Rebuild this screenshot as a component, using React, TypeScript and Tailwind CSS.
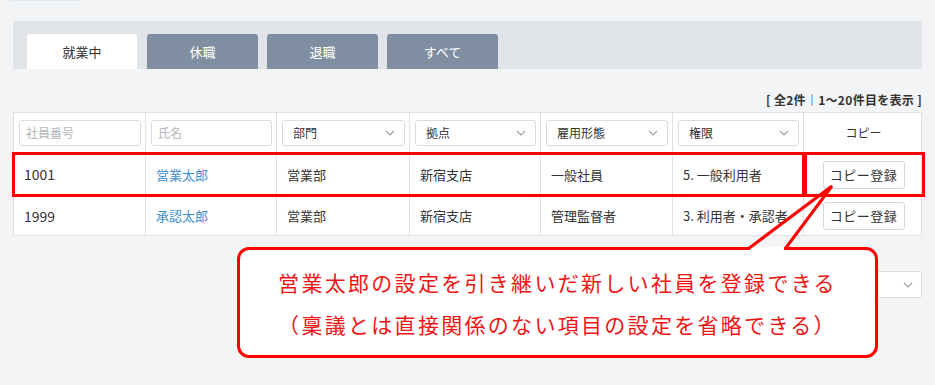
const font = "font-['Noto_Sans_CJK_JP','Noto_Sans',sans-serif]";

const cols = "grid grid-cols-[132px_131px_133px_131px_132px_131px_119px]";

const Chevron = () => (
    <svg width="10" height="6" viewBox="0 0 10 6" className="shrink-0">
        <path d="M1 1l4 4 4-4" fill="none" stroke="#9aa0a6" strokeWidth="1.1" />
    </svg>
);

const Select = ({ label }: { label: string }) => (
    <div className="h-[26px] bg-white border border-[#d9dcdf] rounded-[3px] flex items-center justify-between pl-[10px] pr-[9px] text-[12px] text-[#333]">
        <span>{label}</span>
        <Chevron />
    </div>
);

const Input = ({ ph }: { ph: string }) => (
    <div className="h-[26px] bg-white border border-[#d9dcdf] rounded-[3px] flex items-center pl-[6px] text-[12px] text-[#b3b6ba]">
        {ph}
    </div>
);

const CopyButton = () => (
    <div className="w-[82px] h-[28px] bg-white border border-[#d4d7da] rounded-[3px] flex items-center justify-center text-[13px] text-[#333] tracking-[0.5px]">
        コピー登録
    </div>
);

const rows = [
    { id: '1001', name: '営業太郎', dept: '営業部', site: '新宿支店', type: '一般社員', role: '5. 一般利用者', h: 'h-[44px]' },
    { id: '1999', name: '承認太郎', dept: '営業部', site: '新宿支店', type: '管理監督者', role: '3. 利用者・承認者', h: 'h-[39px]' },
];

const App = () => {
    return (
        <div className={`relative w-[935px] h-[385px] overflow-hidden bg-[#f3f4f6] ${font}`}>
            <div className="h-px w-[70px] ml-[10px] bg-[#dbe9f5]" />
            <div className="px-[13px] pt-[20px]">
                {/* Tabs */}
                <div className="h-[48px] bg-[#e1e5e9] flex items-end gap-[9px] pl-[14px]">
                    <div className="w-[110px] h-[35px] mr-px bg-white rounded-t-[3px] flex items-center justify-center text-[13px] text-[#333]">
                        就業中
                    </div>
                    {['休職', '退職', 'すべて'].map((t) => (
                        <div
                            key={t}
                            className="w-[111px] h-[35px] bg-[#7f8fa1] rounded-t-[3px] flex items-center justify-center text-[13px] text-white"
                        >
                            {t}
                        </div>
                    ))}
                </div>

                {/* Count */}
                <div className="h-[43px] flex items-end justify-end pb-[3px] text-[12px] font-bold text-[#333] tracking-[0.3px]">
                    [ 全2件｜1〜20件目を表示 ]
                </div>

                {/* Table */}
                <div className="bg-white border border-[#dde0e4] border-b-0">
                    <div className={`${cols} h-[40px] border-b border-[#dde0e4]`}>
                        <div className="border-r border-[#dde0e4] pl-[5px] pr-[4px] flex flex-col justify-center"><Input ph="社員番号" /></div>
                        <div className="border-r border-[#dde0e4] pl-[5px] pr-[4px] flex flex-col justify-center"><Input ph="氏名" /></div>
                        <div className="border-r border-[#dde0e4] pl-[5px] pr-[4px] flex flex-col justify-center"><Select label="部門" /></div>
                        <div className="border-r border-[#dde0e4] pl-[5px] pr-[4px] flex flex-col justify-center"><Select label="拠点" /></div>
                        <div className="border-r border-[#dde0e4] pl-[5px] pr-[4px] flex flex-col justify-center"><Select label="雇用形態" /></div>
                        <div className="border-r border-[#dde0e4] pl-[5px] pr-[4px] flex flex-col justify-center"><Select label="権限" /></div>
                        <div className="flex items-center justify-center text-[12px] text-[#333]">コピー</div>
                    </div>
                    {rows.map((r) => (
                        <div key={r.id} className={`${cols} ${r.h} border-b border-[#dde0e4] text-[13px] text-[#333]`}>
                            <div className="border-r border-[#dde0e4] pl-[10px] flex items-center text-[14px]">{r.id}</div>
                            <div className="border-r border-[#dde0e4] pl-[10px] flex items-center text-[#3b8ed0]">{r.name}</div>
                            <div className="border-r border-[#dde0e4] pl-[10px] flex items-center">{r.dept}</div>
                            <div className="border-r border-[#dde0e4] pl-[10px] flex items-center">{r.site}</div>
                            <div className="border-r border-[#dde0e4] pl-[10px] flex items-center">{r.type}</div>
                            <div className="border-r border-[#dde0e4] pl-[10px] flex items-center">{r.role}</div>
                            <div className="flex items-center justify-center"><CopyButton /></div>
                        </div>
                    ))}
                </div>

                {/* Per page */}
                <div className="flex justify-end mt-[35px]">
                    <div className="w-[80px] h-[27px] bg-white border border-[#d9dcdf] rounded-[3px] flex items-center justify-between pl-[10px] pr-[8px] text-[12px] text-[#333]">
                        <span>20件</span>
                        <Chevron />
                    </div>
                </div>
            </div>

            {/* Highlight boxes */}
            <div className="absolute left-[12px] top-[152px] w-[793px] h-[45px] border-[3px] border-[#ff0000]" />
            <div className="absolute left-[804px] top-[152px] w-[121px] h-[45px] border-[3px] border-[#ff0000]" />

            {/* Callout */}
            <div className="absolute left-[237px] top-[247px] w-[641px] h-[111px] bg-white border-[3px] border-[#ff0000] rounded-[12px] flex flex-col items-center justify-center gap-[12px] text-[21px] leading-[30px] text-[#f01414] tracking-[2.3px]">
                <div>営業太郎の設定を引き継いだ新しい社員を登録できる</div>
                <div>（稟議とは直接関係のない項目の設定を省略できる）</div>
            </div>
            <svg className="absolute left-0 top-0" width="935" height="385">
                <line x1="750" y1="248.5" x2="784" y2="248.5" stroke="white" strokeWidth="4" />
                <polyline points="748,249 832,186 785,249" fill="none" stroke="#ff0000" strokeWidth="3" strokeLinejoin="miter" />
            </svg>
        </div>
    );
};

export default App;
